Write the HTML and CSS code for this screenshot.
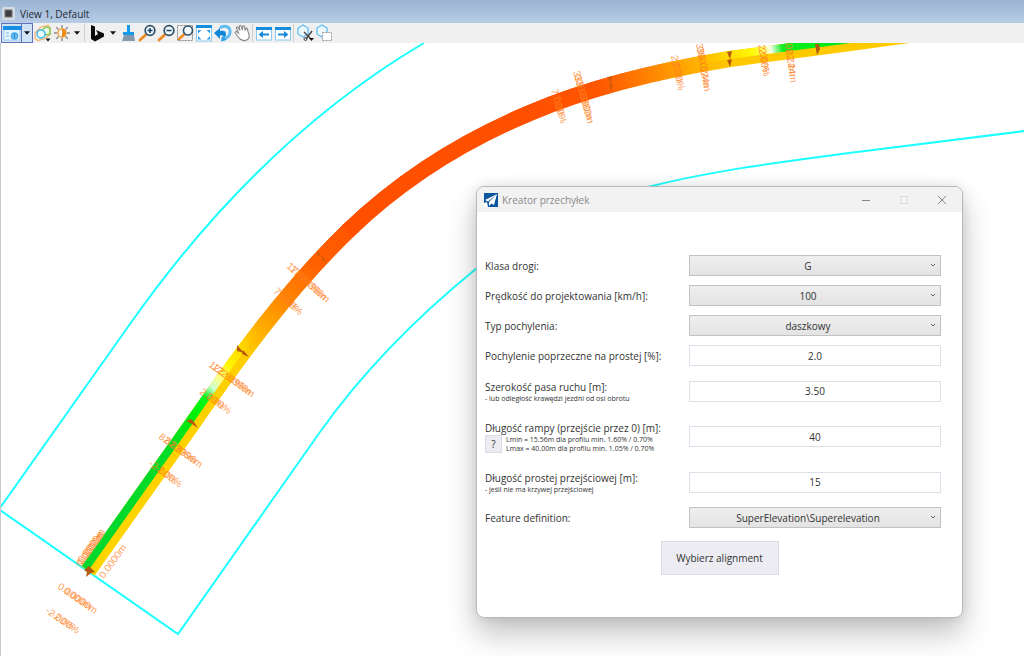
FILE: index.html
```html
<!DOCTYPE html>
<html lang="pl">
<head>
<meta charset="utf-8">
<title>View 1, Default</title>
<link rel="stylesheet" href="styles.css">
</head>
<body>
<main class="view">
  <header class="view-title">
    <svg class="view-icon" viewBox="0 0 13 13" aria-hidden="true"><rect x="0" y="0" width="13" height="13" rx="2" fill="#d3dbe4"/><rect x="3" y="3" width="7" height="7" fill="#403c40" stroke="#777" stroke-width="1"/></svg>
    <h1 class="view-name">View 1, Default</h1>
  </header>

  <nav class="toolbar" aria-label="View tools">
    <div class="split">
      <button class="tool tool-attr" type="button" aria-label="View attributes">
        <svg viewBox="0 0 18 18"><rect x="1" y="3" width="16" height="13" fill="#e8f4fc" stroke="#9dccee"/><rect x="0" y="2" width="18" height="4" fill="#168ee0"/><path d="M3 9h3M3 12h3" stroke="#6bb8ee"/><circle cx="11.500" cy="12" r="4" fill="#8accf6"/><circle cx="11.500" cy="12" r="3" fill="none" stroke="#2a9ae8"/><path d="M11.500 10v4" stroke="#1b86d0" stroke-width="1.500"/></svg>
      </button>
      <button class="drop drop-on" type="button" aria-label="View attributes menu"><svg viewBox="0 0 7 4"><path d="M0 0h7L3.500 4z"/></svg></button>
    </div>
    <button class="tool" type="button" aria-label="Display style">
      <svg viewBox="0 0 18 18"><path d="M1 9l6-6 7-1.500 2 2v7l-5 4-7 2-3-2z" fill="#fdf3e4" stroke="#f0b070" stroke-width="1.200"/><path d="M9 5l3-2 4 1v6l-4 1-3-2z" fill="#eefbe8" stroke="#7bcb4e" stroke-width="1.400"/><circle cx="7" cy="10" r="4" fill="#e9f8fd" stroke="#45bdea" stroke-width="1.600"/><path d="M11.500 14.500h5l-2.500 3z" fill="#111"/></svg>
    </button>
    <button class="tool" type="button" aria-label="Brightness">
      <svg viewBox="0 0 18 18"><path d="M9 1v3M9 14v3M1 9h3M14 9h3M3.300 3.300l2.200 2.200M12.500 12.500l2.200 2.200M3.300 14.700l2.200-2.200M12.500 5.500l2.200-2.200" stroke="#888" stroke-width="1.400"/><circle cx="9" cy="9" r="4" fill="#fff" stroke="#f09a35" stroke-width="1.400"/><path d="M9 5a4 4 0 0 1 0 8z" fill="#f08a18"/></svg>
    </button>
    <button class="drop" type="button" aria-label="Brightness menu"><svg viewBox="0 0 7 4"><path d="M0 0h7L3.500 4z"/></svg></button>
    <span class="sep"></span>
    <button class="tool tool-map" type="button" aria-label="Background map">
      <svg viewBox="0 0 18 18"><path d="M3 1l4 1.500v9.500l3-2-2-4 8 3.500v3L7 17.500 3 15z" fill="#0a0a0a"/></svg>
    </button>
    <button class="drop drop-map" type="button" aria-label="Background map menu"><svg viewBox="0 0 7 4"><path d="M0 0h7L3.500 4z"/></svg></button>
    <button class="tool" type="button" aria-label="Update view">
      <svg viewBox="0 0 18 18"><path d="M8 1h3v7h4v3H4V8h4z" fill="#189aea"/><path d="M5 11h10l1 6H3z" fill="#8298ac"/></svg>
    </button>
    <button class="tool" type="button" aria-label="Zoom in">
      <svg viewBox="0 0 18 18"><path d="M2 16l5.500-5" stroke="#ed8b22" stroke-width="2.800" stroke-linecap="round"/><circle cx="12" cy="6.500" r="4.800" fill="#f4fbff" stroke="#2e516a" stroke-width="1.700"/><path d="M9.500 6.500h5M12 4v5" stroke="#173e66" stroke-width="1.500"/></svg>
    </button>
    <button class="tool" type="button" aria-label="Zoom out">
      <svg viewBox="0 0 18 18"><path d="M2 16l5.500-5" stroke="#ed8b22" stroke-width="2.800" stroke-linecap="round"/><circle cx="12" cy="6.500" r="4.800" fill="#f4fbff" stroke="#2e516a" stroke-width="1.700"/><path d="M9.500 6.500h5" stroke="#173e66" stroke-width="1.500"/></svg>
    </button>
    <button class="tool" type="button" aria-label="Window area">
      <svg viewBox="0 0 18 18"><path d="M1.500 1.500h15v15h-15z" fill="none" stroke="#888" stroke-dasharray="2 1"/><path d="M3 15l5-4.500" stroke="#ed8b22" stroke-width="2.600" stroke-linecap="round"/><circle cx="12" cy="6.500" r="4.500" fill="#f4fbff" stroke="#2e516a" stroke-width="1.600"/></svg>
    </button>
    <button class="tool" type="button" aria-label="Fit view">
      <svg viewBox="0 0 18 18"><rect x="1.500" y="2" width="15" height="15" fill="#fff" stroke="#8cc8f0"/><path d="M1 1h16v3H1z" fill="#168ee0"/><path d="M3 6h3.500L3 9.500zM15 6h-3.500L15 9.500zM3 15.500h3.500L3 12zM15 15.500h-3.500L15 12z" fill="#2a9ae8"/></svg>
    </button>
    <button class="tool" type="button" aria-label="Rotate view">
      <svg viewBox="0 0 18 18"><path d="M6 4c3-3 9-2 10 2 1 5-3 9-7 9" fill="none" stroke="#5bbcf2" stroke-width="2.800"/><path d="M0 9l6-5v3c4-1 6 0 6 3 0 2-1 3-2.500 4 .5-2-1-3-3.500-2.500V15z" fill="#0f86d8"/><path d="M7 17.500l1-5.500 4.500 4z" fill="#2a9ee6"/></svg>
    </button>
    <button class="tool" type="button" aria-label="Pan view">
      <svg viewBox="0 0 18 18"><path d="M7 15L2.500 9.500c-1-1.500.5-2.500 1.500-1.500l1.500 1L3.500 4.500c-.5-1.500 1-2 1.800-.8L7 6.500 6.200 2.600c0-1.500 1.600-1.500 2-.2L9.500 6l.2-3.500c.2-1.200 1.600-1 1.800.2l.8 4 .5-2c.4-1 1.600-.8 1.700.3.3 4 2.500 6 1.500 8.500-.5 1.500-1.500 2.500-3.500 3-2 .3-4-.3-5.500-1.500z" fill="#fff" stroke="#858585" stroke-width="1.100"/></svg>
    </button>
    <span class="sep"></span>
    <button class="tool" type="button" aria-label="View previous">
      <svg viewBox="0 0 18 18"><rect x="1.500" y="4" width="15" height="12" fill="#fff" stroke="#8cc8f0"/><path d="M1 3h16v3H1z" fill="#168ee0"/><path d="M3.500 10.500L8 7v2.500h6v2H8V14z" fill="#1689da"/></svg>
    </button>
    <button class="tool" type="button" aria-label="View next">
      <svg viewBox="0 0 18 18"><rect x="1.500" y="4" width="15" height="12" fill="#fff" stroke="#8cc8f0"/><path d="M1 3h16v3H1z" fill="#168ee0"/><path d="M14.500 10.500L10 7v2.500H4v2h6V14z" fill="#1689da"/></svg>
    </button>
    <span class="sep"></span>
    <button class="tool" type="button" aria-label="Clip volume">
      <svg viewBox="0 0 18 18"><path d="M2 4l5-3 5 3v6l-5 3-5-3z" fill="#eef9ff" stroke="#62bdf0" stroke-width="1.300"/><path d="M8 8l7 7M16 7l-6 8" stroke="#444" stroke-width="1.400"/><circle cx="9.500" cy="15" r="1.500" fill="none" stroke="#444"/><path d="M13 14h5l-2.500 3z" fill="#111"/></svg>
    </button>
    <button class="tool" type="button" aria-label="Clip mask">
      <svg viewBox="0 0 18 18"><path d="M2 4l5-3 5 3v6l-5 3-5-3z" fill="#eef9ff" stroke="#62bdf0" stroke-width="1.300"/><path d="M7.500 8.500h9v8h-9z" fill="#fff" stroke="#999" stroke-dasharray="2 1"/></svg>
    </button>
  </nav>

  <section class="canvas" aria-label="Superelevation drawing">
    <svg class="drawing" viewBox="1 43 1023 613" preserveAspectRatio="xMinYMin slice" aria-hidden="true">
      <defs>
        <linearGradient id="rightStart" gradientUnits="userSpaceOnUse" x1="88" y1="571" x2="349" y2="230">
          <stop offset="0" stop-color="#ffd500"/><stop offset=".56" stop-color="#ffd000"/><stop offset=".63" stop-color="#ffcc00"/><stop offset=".7" stop-color="#ffaa00"/><stop offset=".785" stop-color="#ff8500"/><stop offset=".89" stop-color="#ff6000"/><stop offset="1" stop-color="#ff5500"/>
        </linearGradient>
        <linearGradient id="leftStart" gradientUnits="userSpaceOnUse" x1="88" y1="571" x2="349" y2="230">
          <stop offset="0" stop-color="#00d72d"/><stop offset=".35" stop-color="#00dc28"/><stop offset=".44" stop-color="#00f008"/><stop offset=".488" stop-color="#00f81e"/><stop offset=".515" stop-color="#d0ffd0"/><stop offset=".545" stop-color="#ffff80"/><stop offset=".58" stop-color="#fff500"/><stop offset=".63" stop-color="#ffd800"/><stop offset=".7" stop-color="#ffaa00"/><stop offset=".785" stop-color="#ff8500"/><stop offset=".89" stop-color="#ff6000"/><stop offset="1" stop-color="#ff5500"/>
        </linearGradient>
        <linearGradient id="rightEnd" gradientUnits="userSpaceOnUse" x1="530" y1="113" x2="905" y2="37">
          <stop offset="0" stop-color="#ff5000"/><stop offset=".18" stop-color="#ff5500"/><stop offset=".27" stop-color="#ff7000"/><stop offset=".37" stop-color="#ff9400"/><stop offset=".47" stop-color="#ffb800"/><stop offset=".55" stop-color="#ffc800"/><stop offset="1" stop-color="#ffcc00"/>
        </linearGradient>
        <linearGradient id="leftEnd" gradientUnits="userSpaceOnUse" x1="530" y1="113" x2="905" y2="37">
          <stop offset="0" stop-color="#ff5000"/><stop offset=".18" stop-color="#ff5500"/><stop offset=".27" stop-color="#ff7000"/><stop offset=".37" stop-color="#ff9400"/><stop offset=".47" stop-color="#ffb800"/><stop offset=".54" stop-color="#ffdc00"/><stop offset=".6" stop-color="#fff800"/><stop offset=".63" stop-color="#ffff60"/><stop offset=".65" stop-color="#f4fff0"/><stop offset=".68" stop-color="#10ee20"/><stop offset=".76" stop-color="#00ec18"/><stop offset="1" stop-color="#00d72d"/>
        </linearGradient>
        <clipPath id="leftLane"><path d="M88 571L193 423C240 355 289 288 349 230C401 180 463 141 530 113C593 86 662 70 730 59L843 44L960 28V0H0V500Z"/></clipPath>
      </defs>

      <g class="boundary">
        <path d="M424 43C314 108 218 199 130 324L0 508V510L178 634L320 432C364 370 418 316 477 268C530 227 590 202 648 187C710 171 775 163 849 153L1025 131"/>
      </g>

      <g class="road">
        <path stroke="url(#rightStart)" d="M88 571L193 423C240 355 289 288 349 230"/>
        <path stroke="url(#rightEnd)" d="M348 231L349 230C401 180 463 141 530 113C593 86 662 70 730 59L843 44L960 28"/>
      </g>
      <g class="road" clip-path="url(#leftLane)">
        <path stroke="url(#leftStart)" d="M88 571L193 423C240 355 289 288 349 230"/>
        <path stroke="url(#leftEnd)" d="M348 231L349 230C401 180 463 141 530 113C593 86 662 70 730 59L843 44L960 28"/>
      </g>

      <g class="flow-mark">
        <path d="M84 570l5-4 6 6-4 1-5 4 1-5z"/>
        <path d="M186 421l5-2 3 3 4 6-6-4z"/>
        <path d="M237 345l7 8-7-2zM243 350l6 7-7-3z"/>
        <path class="faint" d="M317 250l5 7-5-2zM322 256l5 7-5-3z"/>
        <path class="faint" d="M607 77l5-1-1 8zM609 84l4-1-2 9z"/>
        <path d="M727 52l5-1-2 8zM727 60l5-1-2 8z"/>
        <path d="M815 44h4l1 5-3 6z"/>
      </g>

      <g class="station">
        <g transform="translate(81 567) rotate(-54)"><text>0.0000m</text><text x="2">0.0000m</text><text x="4" y="-1">0.0000m</text></g>
        <g transform="translate(104 579) rotate(-54)"><text>0.0000m</text></g>
        <g transform="translate(57 588) rotate(35)"><text>0.0000m</text><text x="7">0.0000m</text></g>
        <g transform="translate(45 612) rotate(35)"><text>-2.00%</text><text x="7">-2.00%</text></g>
        <g transform="translate(158 438) rotate(36)"><text>82.8396m</text><text x="7">82.8396m</text></g>
        <g transform="translate(148 465) rotate(36)"><text>-2.00%</text><text x="7">-2.00%</text></g>
        <g transform="translate(208 366) rotate(36)"><text>122.8396m</text><text x="4">122.8396m</text></g>
        <g transform="translate(199 393) rotate(36)"><text>2.00%</text><text x="8">2.00%</text></g>
        <g transform="translate(286 267) rotate(42)"><text>178.8396m</text><text x="4">178.8396m</text></g>
        <g transform="translate(273 292) rotate(42)"><text>7.00%</text><text x="7">7.00%</text></g>
        <g transform="translate(573 72) rotate(74)"><text>338.8380m</text><text x="4">338.8380m</text></g>
        <g transform="translate(551 90) rotate(74)"><text>7.00%</text><text x="7">7.00%</text></g>
        <g transform="translate(671 56) rotate(78)"><text>2.00%</text><text x="7">2.00%</text></g>
        <g transform="translate(696 44) rotate(80)"><text>390.024m</text><text x="4">390.024m</text></g>
        <g transform="translate(758 45) rotate(80)"><text>2.00%</text><text x="4">2.00%</text></g>
        <g transform="translate(785 44) rotate(82)"><text>02.24m</text><text x="6">02.24m</text></g>
      </g>
    </svg>

    <section class="dialog" role="dialog" aria-labelledby="dialog-title">
      <header class="dialog-bar">
        <svg class="dialog-icon" viewBox="0 0 14 14" aria-hidden="true"><rect width="14" height="14" fill="#0a559f"/><path d="M13 1L1 7l3 1.500zM13 1L5 9v4l2.500-2.500L10 12zM0 10l3-1 1 5H0z" fill="#fff"/></svg>
        <h2 class="dialog-title" id="dialog-title">Kreator przechyłek</h2>
        <button class="win-btn" type="button" aria-label="Minimalizuj"><svg viewBox="0 0 10 10"><path d="M1 5.500h8"/></svg></button>
        <button class="win-btn win-off" type="button" aria-label="Maksymalizuj" disabled><svg viewBox="0 0 10 10"><path d="M1.500 1.500h7v7h-7z"/></svg></button>
        <button class="win-btn" type="button" aria-label="Zamknij"><svg viewBox="0 0 10 10"><path d="M1 1l8 8M9 1L1 9"/></svg></button>
      </header>
      <form class="form">
        <div class="row">
          <label class="label" for="klasa">Klasa drogi:</label>
          <div class="pick"><select class="field" id="klasa"><option>G</option></select><svg viewBox="0 0 6 4"><path d="M1 1l2 2 2-2"/></svg></div>
        </div>
        <div class="row">
          <label class="label" for="predkosc">Prędkość do projektowania [km/h]:</label>
          <div class="pick"><select class="field" id="predkosc"><option>100</option></select><svg viewBox="0 0 6 4"><path d="M1 1l2 2 2-2"/></svg></div>
        </div>
        <div class="row">
          <label class="label" for="typ">Typ pochylenia:</label>
          <div class="pick"><select class="field" id="typ"><option>daszkowy</option></select><svg viewBox="0 0 6 4"><path d="M1 1l2 2 2-2"/></svg></div>
        </div>
        <div class="row">
          <label class="label" for="pochylenie">Pochylenie poprzeczne na prostej [%]:</label>
          <input class="field" id="pochylenie" type="text" value="2.0">
        </div>
        <div class="row row-note">
          <div><label class="label" for="szerokosc">Szerokość pasa ruchu [m]:</label><p class="note">- lub odległość krawędzi jezdni od osi obrotu</p></div>
          <input class="field" id="szerokosc" type="text" value="3.50">
        </div>
        <div class="row row-help">
          <div>
            <label class="label" for="rampa">Długość rampy (przejście przez 0) [m]:</label>
            <div class="help"><button class="help-btn" type="button" aria-label="Pomoc">?</button><p class="note">Lmin = 15.56m dla profilu min. 1.60% / 0.70%<br>Lmax = 40.00m dla profilu min. 1.05% / 0.70%</p></div>
          </div>
          <input class="field" id="rampa" type="text" value="40">
        </div>
        <div class="row row-note">
          <div><label class="label" for="prosta">Długość prostej przejściowej [m]:</label><p class="note">- jeśli nie ma krzywej przejściowej</p></div>
          <input class="field" id="prosta" type="text" value="15">
        </div>
        <div class="row">
          <label class="label" for="feature">Feature definition:</label>
          <div class="pick"><select class="field" id="feature"><option>SuperElevation\Superelevation</option></select><svg viewBox="0 0 6 4"><path d="M1 1l2 2 2-2"/></svg></div>
        </div>
        <button class="submit" type="button">Wybierz alignment</button>
      </form>
    </section>
  </section>
</main>
</body>
</html>
```
FILE: styles.css
```css
* { box-sizing: border-box; }
body { margin: 0; font-family: "Open Sans", "Noto Sans", sans-serif; font-size: 10px; color: #333; }
h1, h2, p { margin: 0; font-weight: 400; }
button { padding: 0; border: 0; background: none; font: inherit; color: inherit; }
svg { display: block; }

.view { display: flex; flex-direction: column; height: 100vh; min-height: 640px; background: #fff; overflow: hidden; }
.view-title { display: flex; align-items: center; gap: 5px; height: 23px; padding: 4px 2px 0; background: linear-gradient(#9ab4d2, #b7cce5); flex: none; }
.view-icon { width: 13px; height: 13px; }
.view-name { font-size: 10px; line-height: 16px; color: #222b36; }

.toolbar { display: flex; align-items: center; height: 20px; padding-left: 1px; background: #f0f0f0; flex: none; }
.tool { display: flex; align-items: center; justify-content: center; width: 19px; height: 20px; flex: none; }
.tool svg { width: 18px; height: 18px; }
.split { display: flex; height: 20px; border: 1px solid #6570bd; background: #cfe3f7; }
.tool-attr { width: 19px; height: 18px; }
.tool-map { width: 22px; }
.drop { display: flex; align-items: center; justify-content: center; width: 12px; height: 20px; flex: none; }
.drop svg { width: 6px; height: 4px; fill: #111; }
.drop-on { width: 11px; height: 18px; border-left: 1px solid #6570bd; }
.drop-map { width: 10px; }
.sep { width: 1px; height: 18px; margin: 0 1px; background: #cfcfcf; }

.canvas { position: relative; flex: 1; min-height: 0; border-left: 1px solid #c4c8cf; overflow: hidden; }
.drawing { width: 100%; height: 100%; }
.boundary { fill: none; stroke: #1effff; stroke-width: 2; }
.road { fill: none; stroke-width: 16; }
.flow-mark { fill: #b5570c; }
.faint { opacity: 0.6; }
.station { font-family: "Liberation Sans", Arial, sans-serif; font-size: 10px; fill: #ff7f1e; fill-opacity: 0.8; }

.dialog { position: absolute; top: 143px; right: 61px; width: 487px; border: 1px solid #b9b9b9; border-radius: 8px; background: #fff; overflow: hidden; box-shadow: 0 16px 30px rgba(0, 0, 0, 0.24), 0 0 12px rgba(0, 0, 0, 0.1); }
.dialog-bar { display: flex; align-items: center; height: 25px; padding: 0 1px 0 7px; background: #f2f2f2; }
.dialog-icon { width: 14px; height: 14px; margin-right: 4px; }
.dialog-title { flex: 1; font-size: 10px; line-height: 16px; color: #8a8a8a; }
.win-btn { display: flex; align-items: center; justify-content: center; width: 38px; height: 25px; }
.win-btn svg { width: 10px; height: 10px; fill: none; stroke: #888; stroke-width: 1; }
.win-off svg { stroke: #dcdcdc; }

.form { display: flex; flex-direction: column; gap: 9px; padding: 43px 21px 42px 8px; }
.row { display: grid; grid-template-columns: 1fr 252px; align-items: center; min-height: 21px; }
.row-note { min-height: 32px; }
.row-help { min-height: 41px; }
.label { display: block; font-size: 10px; line-height: 14px; }
.note { font-size: 7px; line-height: 9px; white-space: nowrap; }
.help { display: flex; align-items: center; gap: 4px; }
.help-btn { width: 17px; height: 18px; border: 1px solid #dcdce6; background: #ececf2; font-size: 10px; line-height: 16px; }
.field { display: block; width: 100%; height: 21px; margin: 0; padding: 0; border: 1px solid #dedfe9; border-radius: 0; background: #fff; font: inherit; color: #333; text-align: center; }
.pick { position: relative; }
.pick .field { appearance: none; padding-right: 14px; border-color: #c2c2c2; background: linear-gradient(#efefef, #e3e3e3); text-align-last: center; }
.pick svg { position: absolute; top: 8px; right: 5px; width: 6px; height: 4px; fill: none; stroke: #666; pointer-events: none; }
.submit { align-self: center; width: 118px; height: 34px; margin: 4px 0 0 13px; border: 1px solid #dcdce6; background: #ececf2; }
```
